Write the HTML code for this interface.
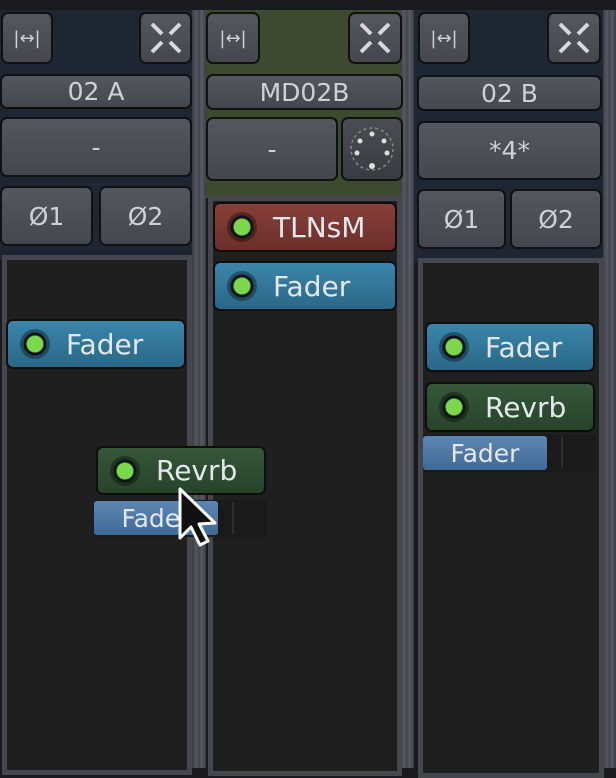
<!DOCTYPE html>
<html><head><meta charset="utf-8"><style>
*{box-sizing:border-box;margin:0;padding:0}
body{width:616px;height:768px;overflow:hidden;background:#1a1a1c;position:relative;font-family:"DejaVu Sans","Liberation Sans",sans-serif;color:#d6d6de}
.a{position:absolute}
.btn{position:absolute;border:2px solid #111;border-radius:7px;background:linear-gradient(#55575f,#45464e);display:flex;align-items:center;justify-content:center;font-size:25px;color:#cfd0d8}
.sep{position:absolute;top:10px;height:758px;background:linear-gradient(90deg,#3b3c44,#575862 30%,#44454d 50%,#5a5b64 70%,#3b3c44)}
.pbox{position:absolute;background:#1f1f1f;border:5px solid #45464e}
.proc{position:absolute;border:2px solid #0e0e0e;border-radius:7px;display:flex;align-items:center;font-size:28px;color:#e4e8ec;padding-left:12px}
.led{width:30px;height:30px;border-radius:50%;background:radial-gradient(circle,#79d94a 0 8px,#101418 9px 11px,rgba(0,0,0,.35) 12px 15px);margin-right:16px;flex:none}
.blue{background:linear-gradient(#3a86ab,#2a6787)}
.green{background:linear-gradient(#35573a,#274429)}
.red{background:linear-gradient(#874039,#6c2e2a)}
.bar{position:absolute;background:linear-gradient(#5d87b3,#3e6a97);border-radius:3px;font-size:25px;display:flex;align-items:center;justify-content:center;color:#e6e8ee}
</style></head><body>
<!-- strip backgrounds -->
<div class="a" style="left:0;top:10px;width:194px;height:250px;background:#1e2633"></div>
<div class="a" style="left:205px;top:10px;width:200px;height:188px;background:#3e4a2d"></div>
<div class="a" style="left:412px;top:10px;width:194px;height:252px;background:#1e2633"></div>
<div class="sep" style="left:192px;width:14px"></div>
<div class="sep" style="left:400px;width:14px"></div>
<div class="sep" style="left:603px;width:13px"></div>

<!-- strip 1 -->
<div class="btn" style="left:1px;top:12px;width:52px;height:52px;font-size:18px">|↔|</div>
<div class="btn" style="left:139px;top:12px;width:53px;height:52px"><svg width="34" height="34" viewBox="0 0 34 34" stroke="#d8d8d8" stroke-width="4"><path d="M3 3L13 13M21 21L31 31M31 3L21 13M13 21L3 31"/></svg></div>
<div class="btn" style="left:0;top:74px;width:192px;height:35px">02 A</div>
<div class="btn" style="left:0;top:117px;width:192px;height:60px">-</div>
<div class="btn" style="left:0;top:186px;width:93px;height:60px">Ø1</div>
<div class="btn" style="left:99px;top:186px;width:93px;height:60px">Ø2</div>
<div class="pbox" style="left:2px;top:255px;width:190px;height:520px"></div>
<div class="proc blue" style="left:6px;top:319px;width:180px;height:50px"><div class="led"></div>Fader</div>

<!-- strip 2 -->
<div class="btn" style="left:206px;top:12px;width:54px;height:52px;font-size:18px">|↔|</div>
<div class="btn" style="left:348px;top:12px;width:54px;height:52px"><svg width="34" height="34" viewBox="0 0 34 34" stroke="#d8d8d8" stroke-width="4"><path d="M3 3L13 13M21 21L31 31M31 3L21 13M13 21L3 31"/></svg></div>
<div class="btn" style="left:206px;top:74px;width:197px;height:36px">MD02B</div>
<div class="btn" style="left:206px;top:117px;width:132px;height:64px">-</div>
<div class="btn" style="left:341px;top:117px;width:62px;height:64px;background:linear-gradient(#4c4d52,#3a3b40)"><svg width="50" height="50" viewBox="0 0 50 50" fill="#ddd"><circle cx="25" cy="25" r="21" fill="none" stroke="#888" stroke-width="1.5" stroke-dasharray="3 3"/><circle cx="25" cy="10" r="2.5"/><circle cx="13" cy="17" r="2.5"/><circle cx="37" cy="17" r="2.5"/><circle cx="10" cy="29" r="2.5"/><circle cx="40" cy="29" r="2.5"/><circle cx="25" cy="42" r="3"/></svg></div>
<div class="pbox" style="left:208px;top:196px;width:194px;height:580px"></div>
<div class="proc red" style="left:213px;top:202px;width:184px;height:50px"><div class="led"></div>TLNsM</div>
<div class="proc blue" style="left:213px;top:261px;width:184px;height:50px"><div class="led"></div>Fader</div>

<!-- strip 3 -->
<div class="btn" style="left:418px;top:12px;width:52px;height:52px;font-size:18px">|↔|</div>
<div class="btn" style="left:547px;top:12px;width:54px;height:52px"><svg width="34" height="34" viewBox="0 0 34 34" stroke="#d8d8d8" stroke-width="4"><path d="M3 3L13 13M21 21L31 31M31 3L21 13M13 21L3 31"/></svg></div>
<div class="btn" style="left:417px;top:75px;width:185px;height:36px">02 B</div>
<div class="btn" style="left:417px;top:121px;width:185px;height:59px">*4*</div>
<div class="btn" style="left:417px;top:189px;width:89px;height:60px">Ø1</div>
<div class="btn" style="left:510px;top:189px;width:92px;height:60px">Ø2</div>
<div class="pbox" style="left:418px;top:258px;width:186px;height:520px"></div>
<div class="proc blue" style="left:425px;top:322px;width:170px;height:50px"><div class="led"></div>Fader</div>
<div class="proc green" style="left:425px;top:382px;width:170px;height:50px"><div class="led"></div>Revrb</div>
<div class="a" style="left:423px;top:435px;width:173px;height:37px;background:#1a1a1a"></div>
<div class="bar" style="left:423px;top:436px;width:124px;height:34px">Fader</div>
<div class="a" style="left:561px;top:437px;width:2px;height:32px;background:#2e2e2e"></div>

<!-- dragged -->
<div class="proc green" style="left:96px;top:446px;width:170px;height:49px"><div class="led"></div>Revrb</div>
<div class="a" style="left:94px;top:500px;width:173px;height:37px;background:#1a1a1a"></div>
<div class="bar" style="left:94px;top:501px;width:124px;height:34px">Fader</div>
<div class="a" style="left:232px;top:502px;width:2px;height:32px;background:#2e2e2e"></div>
<svg class="a" style="left:176px;top:486px" width="50" height="62" viewBox="0 0 50 62"><path d="M4 3L4 52L15 41L24 59L32 55L23 38L39 37Z" fill="#111" stroke="#fff" stroke-width="3" stroke-linejoin="round"/></svg>
</body></html>
